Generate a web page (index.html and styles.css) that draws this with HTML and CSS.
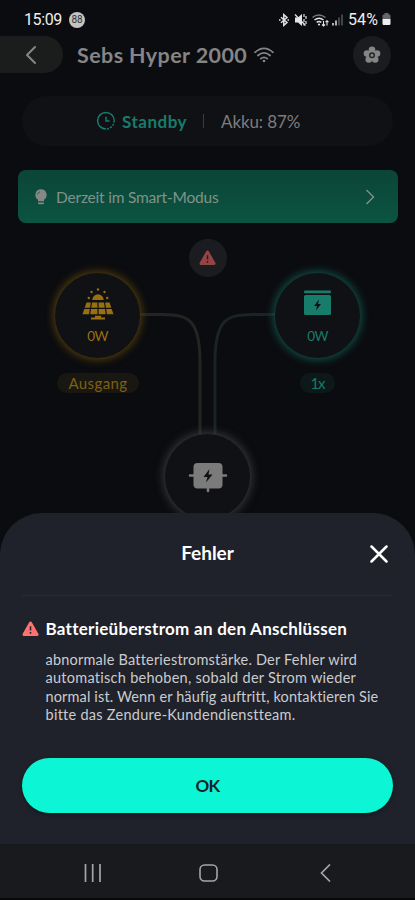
FILE: index.html
```html
<!DOCTYPE html>
<html lang="de">
<head>
<meta charset="utf-8">
<meta name="viewport" content="width=device-width, initial-scale=1">
<title>Sebs Hyper 2000</title>
<link rel="stylesheet" href="styles.css">
</head>
<body>
<div class="phone">
  <div class="status">
    <span class="time">15:09</span>
    <span class="badge">88</span>
    <svg class="status-icons" width="66" height="16" viewBox="0 0 66 16" fill="none" stroke="#e4e4e6" stroke-width="1.5">
      <path d="M3 5.300l6 5.200-3.200 2.900V2.600L9 5.500l-6 5.200M1 8h1.500M9.500 8H11"/>
      <path d="M17 5.500h3l4-3.500v12l-4-3.500h-3z" fill="#e4e4e6" stroke="none"/>
      <path d="M17 2.500l10.500 11" stroke-width="1.300"/>
      <path d="M26 2v3M26 7v3M28 4v3M28 9v3M26 11.500v2" stroke-width="1.200"/>
      <path d="M34.500 5.500q6-5 13 0" stroke="#77787b"/>
      <path d="M36.500 8q4.500-3.500 9 0M38.700 10.400q2.300-1.800 4.600 0" />
      <circle cx="41" cy="12.500" r="1.100" fill="#e4e4e6" stroke="none"/>
      <path d="M45.500 9v5m-1.500-1.500 1.500 1.500 1.500-1.500M49 13.500V8.700m-1.500 1.500L49 8.700l1.500 1.500" stroke-width="1.100"/>
      <path d="M55 13.500v-2.500M58 13.500v-5" />
      <path d="M61 13.500v-8M64 13.500v-11" stroke="#56575a"/>
    </svg>
    <span class="percent">54%</span>
    <svg class="battery" width="9" height="13" viewBox="0 0 9 13"><path d="M2.500 0h4v1.500h.8q1.200 0 1.200 1.200V6h-8V2.700q0-1.200 1.200-1.200h.8z" fill="#66676a"/><path d="M.5 6h8v4.800q0 1.200-1.200 1.200H1.700Q.5 12 .5 10.800z" fill="#eee"/></svg>
  </div>

  <header class="header">
    <div class="back"><svg width="12" height="20" viewBox="0 0 12 20"><path d="M10 2L2 10l8 8" fill="none" stroke="#858586" stroke-width="2" stroke-linecap="round" stroke-linejoin="round"/></svg></div>
    <h1 class="title">Sebs Hyper 2000</h1>
    <svg class="wifi" width="20" height="16" viewBox="0 0 20 16" fill="none" stroke="#858586" stroke-width="1.700" stroke-linecap="round"><path d="M1 5.300q9-8 18 0M3.900 8.500q6.100-5.200 12.200 0M6.800 11.600q3.200-2.600 6.400 0"/><circle cx="10" cy="14" r="1.300" fill="#858586" stroke="none"/></svg>
    <div class="gear"><svg width="18" height="18" viewBox="0 0 18 18" fill="#858586"><circle cx="9" cy="3.800" r="3.300"/><circle cx="14" cy="7.600" r="3.300"/><circle cx="12.200" cy="13.500" r="3.300"/><circle cx="5.800" cy="13.500" r="3.300"/><circle cx="4" cy="7.600" r="3.300"/><circle cx="9" cy="9" r="5"/><circle cx="9" cy="9.200" r="2.300" stroke="#252628" stroke-width="1.500"/></svg></div>
  </header>

  <div class="summary">
    <svg width="20" height="20" viewBox="0 0 20 20" fill="none" stroke="#177c69" stroke-width="1.500"><path d="M10 18A8.300 8.300 0 1 1 18.200 9.700"/><path d="M18.200 9.700A8.300 8.300 0 0 1 10 18" stroke-dasharray="2 1.300"/><path d="M10 5.800v4.300h3.500"/></svg>
    <span class="standby">Standby</span>
    <span class="bar"></span>
    <span class="akku">Akku: 87%</span>
  </div>

  <div class="banner">
    <svg width="12" height="16" viewBox="0 0 12 16"><path d="M6 .3a5.700 5.700 0 0 0-3 10.500v1.500h6v-1.500A5.700 5.700 0 0 0 6 .3zM3 13.500h6v.8q0 .9-1 .9H4q-1 0-1-.9z" fill="#858886"/><path d="M2.500 5.500q.3-2.200 2.500-2.700" fill="none" stroke="#315f50" stroke-width="1"/></svg>
    <span class="mode">Derzeit im Smart-Modus</span>
    <svg class="chevron" width="10" height="16" viewBox="0 0 10 16"><path d="M1.500 1l7 7-7 7" fill="none" stroke="#829289" stroke-width="1.400"/></svg>
  </div>

  <main class="diagram">
    <svg class="wires" width="415" height="290" viewBox="0 0 415 290" fill="none" stroke-width="3">
      <path d="M140 91.500h22C190 91.500 200 98 200 140v75" stroke="#252423"/>
      <path d="M275 91.500h-22C225 91.500 215 98 215 140v75" stroke="#1b2324"/>
    </svg>
    <div class="alert"><svg width="17" height="16" viewBox="0 0 17 16"><path d="M8.500 2L15 13.500H2z" fill="#944445" stroke="#944445" stroke-width="3" stroke-linejoin="round"/><path d="M8.500 5.200v4.300M8.500 11v1.700" stroke="#202124" stroke-width="1.500"/></svg></div>
    <div class="node solar">
      <svg width="32" height="33" viewBox="0 0 32 33" fill="#98700f"><path d="M10.300 12a5.700 5.700 0 0 1 11.400 0z"/><circle cx="16" cy="1.500" r="1.200"/><circle cx="9.500" cy="4" r="1.200"/><circle cx="22.500" cy="4" r="1.200"/><circle cx="6.800" cy="10" r="1.200"/><circle cx="25.200" cy="10" r="1.200"/><path d="M4.500 14.500h23l4 11.700H.5z"/><path d="M2 20.300h28M16 14v13M9.500 14l-2 13M22.500 14l2 13" stroke="#101115" stroke-width="1.200"/><path d="M13 27.800h6v1.700h4v2H9v-2h4z"/></svg>
      <span class="watt">0W</span>
    </div>
    <div class="tag tag-out">Ausgang</div>
    <div class="node store">
      <svg width="27" height="26" viewBox="0 0 27 26"><rect y=".5" width="27" height="2.700" rx="1" fill="#177c69"/><rect y="5" width="27" height="20" rx="1.500" fill="#177c69"/><path d="M15 9.500l-5 6.500h3l-1 4.500 5-6.500h-3z" fill="#101115"/></svg>
      <span class="watt">0W</span>
    </div>
    <div class="tag tag-count">1x</div>
    <div class="node hub">
      <svg width="40" height="31" viewBox="0 0 40 31"><path d="M2 13.500h36M20 20v9" stroke="#7b7b7c" stroke-width="2.600" stroke-linecap="round"/><rect x="5.500" y="1" width="29" height="25.500" rx="4" fill="#7b7b7c"/><path d="M21.500 7l-6 8h4l-1.500 5.500 6.500-8h-4z" fill="#101115"/></svg>
    </div>
  </main>

  <section class="sheet">
    <div class="sheet-head">
      <h2 class="sheet-title">Fehler</h2>
      <svg class="close" width="18" height="18" viewBox="0 0 18 18"><path d="M1.500 1.500l15 15M16.500 1.500l-15 15" stroke="#fff" stroke-width="2.500" stroke-linecap="round"/></svg>
    </div>
    <div class="error">
      <svg class="warn" width="17" height="16" viewBox="0 0 17 16"><path d="M8.500 2L15 13.500H2z" fill="#ff7272" stroke="#ff7272" stroke-width="3" stroke-linejoin="round"/><path d="M8.500 5.200v4.300M8.500 11v1.700" stroke="#20222b" stroke-width="1.500"/></svg>
      <div>
        <h3 class="error-title">Batterieüberstrom an den Anschlüssen</h3>
        <p class="error-text"><span class="l1">abnormale Batteriestromstärke. Der Fehler wird</span><br><span class="l2">automatisch behoben, sobald der Strom wieder</span><br><span class="l3">normal ist. Wenn er häufig auftritt, kontaktieren Sie</span><br><span class="l4">bitte das Zendure-Kundendienstteam.</span></p>
      </div>
    </div>
    <button class="ok">OK</button>
  </section>
  <nav class="nav">
    <svg width="18" height="18" viewBox="0 0 18 18" stroke="#a5a5a7" stroke-width="1.700"><path d="M1.500 0v18M8.700 0v18M16 0v18"/></svg>
    <svg class="home" width="19" height="18" viewBox="0 0 19 18"><rect x="1" y="1" width="17" height="16" rx="4.500" fill="none" stroke="#a5a5a7" stroke-width="1.600"/></svg>
    <svg class="nav-back" width="11" height="18" viewBox="0 0 11 18"><path d="M10 .5L1.500 9l8.500 8.500" fill="none" stroke="#a5a5a7" stroke-width="1.700"/></svg>
  </nav>
</div>
</body>
</html>
```
FILE: styles.css
```css
* { box-sizing: border-box; }
body { margin: 0; background: #0b0c10; font-family: Lato, sans-serif; }
svg { display: block; flex: none; }
h1, h2, h3, p { margin: 0; }
.phone { position: relative; width: 415px; height: 900px; overflow: hidden; background: #0b0c10; white-space: nowrap; }

.status { display: flex; align-items: center; height: 36px; padding: 3px 0 0 24px; color: #eee; font: 16px Roboto, sans-serif; }
.time { width: 45px; letter-spacing: -0.4px; }
.badge { width: 16px; height: 16px; border-radius: 50%; background: #c4c4c2; color: #333; font-size: 10px; line-height: 16px; text-align: center; }
.status-icons { margin-left: 193px; }
.percent { width: 34px; margin-left: 4px; letter-spacing: 0.1px; }
.battery { margin-left: 0; }

.header { display: flex; align-items: center; height: 37px; }
.back { display: flex; align-items: center; width: 63px; height: 37px; padding-left: 25px; border-radius: 0 19px 19px 0; background: #1b1c1c; }
.title { width: 170px; margin-left: 14px; color: #858586; font-size: 21.5px; font-weight: 700; letter-spacing: 0.4px; }
.wifi { margin-left: 7px; }
.gear { display: flex; align-items: center; justify-content: center; width: 38px; height: 38px; margin-left: 79px; border-radius: 50%; background: #1b1c1f; }

.summary { display: flex; align-items: center; height: 50px; margin: 23px 22px 0; padding-left: 74px; border-radius: 25px; background: #101115; font-size: 17px; }
.standby { width: 66px; margin-left: 6px; color: #177c69; font-weight: 700; letter-spacing: 0.5px; }
.bar { width: 1px; height: 14px; margin: 0 17px 0 15px; background: #3b3c3e; }
.akku { color: #7c7c7e; letter-spacing: -0.1px; }

.banner { display: flex; align-items: center; height: 53px; margin: 24px 17px 0 17.5px; padding: 0 23px 0 17.5px; border-radius: 8px; background: linear-gradient(#0b4537, #0c5442); }
.mode { margin-left: 9px; color: #829289; font-size: 15.5px; letter-spacing: -0.2px; }
.chevron { margin-left: auto; }

.diagram { position: relative; height: 300px; }
.wires { position: absolute; left: 0; top: 0; }
.alert { position: absolute; left: 188.5px; top: 15.5px; display: flex; align-items: center; justify-content: center; width: 38px; height: 38px; border-radius: 50%; background: #1b1c1f; }
.node { position: absolute; display: flex; flex-direction: column; align-items: center; width: 85px; height: 85px; border-radius: 50%; background: #101115; }
.solar { left: 55px; top: 49.5px; padding-top: 15px; color: #98700f; box-shadow: 0 0 9px 1.5px #57410c; }
.store { left: 275px; top: 49.5px; padding-top: 17.5px; color: #177c69; box-shadow: 0 0 9px 1.5px #11564b; }
.hub { left: 165px; top: 211px; padding-top: 27.5px; box-shadow: 0 0 10px 1.5px #3c3c3e; }
.watt { position: absolute; top: 54px; font-size: 13.5px; line-height: 18px; letter-spacing: -0.6px; }
.tag { position: absolute; top: 150px; height: 20px; border-radius: 10px; font-size: 15px; line-height: 21px; text-align: center; }
.tag-out { left: 57px; width: 82px; background: #181712; color: #80600f; letter-spacing: 0.4px; }
.tag-count { left: 300px; width: 35px; background: #0c1918; color: #177c69; letter-spacing: -1px; }

.sheet { position: absolute; left: 0; right: 0; top: 513px; height: 331px; padding: 0 22px; border-radius: 42px 42px 0 0; background: #20222b; }
.sheet-head { position: relative; display: flex; align-items: center; justify-content: center; height: 83px; padding-bottom: 3px; border-bottom: 1px solid #292b33; }
.sheet-title { color: #fff; font-size: 19px; font-weight: 700; }
.close { position: absolute; right: 5px; top: 31.5px; }
.error { display: flex; gap: 6.5px; padding-top: 22px; }
.warn { margin-top: 3px; }
.error-title { color: #fff; font-size: 17px; line-height: 22px; letter-spacing: 0.27px; }
.error-text { margin-top: 11px; color: #cbccce; font-size: 14.5px; line-height: 18.4px; }
.l1 { letter-spacing: 0.21px; }
.l2 { letter-spacing: 0.27px; }
.l3 { letter-spacing: 0.14px; }
.l4 { letter-spacing: 0.27px; }
.ok { display: block; width: 371px; height: 55px; margin: 33px 0 0; border: 0; border-radius: 28px; background: #0cf5d4; color: #17232a; font: 700 17px Lato, sans-serif; letter-spacing: -0.7px; box-shadow: 0 2px 4px #15171e; }
.nav { position: absolute; left: 0; right: 0; top: 844px; height: 56px; display: flex; padding: 20px 0 0 84px; background: #191a1e; border-bottom: 2px solid #08090a; }
.home { margin-left: 97px; }
.nav-back { margin-left: 102px; }
```
